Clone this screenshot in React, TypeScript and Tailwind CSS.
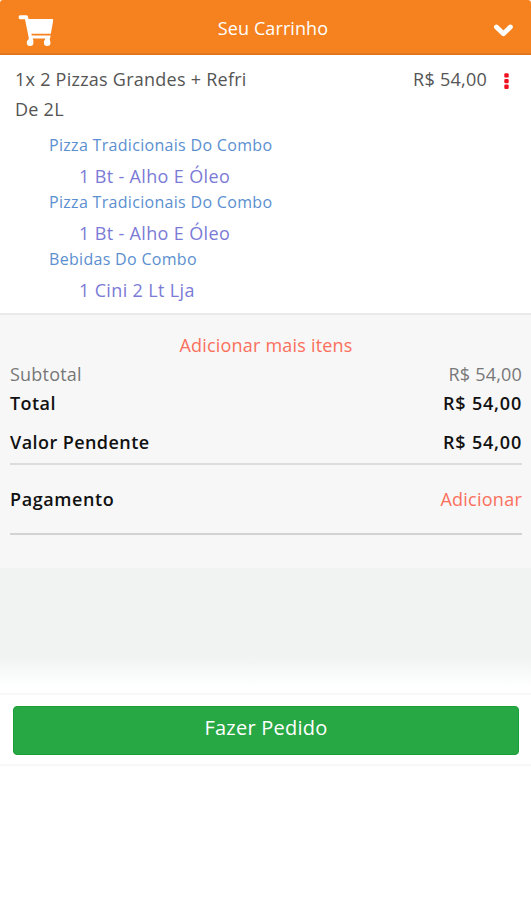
import type { ReactNode } from 'react'

interface ComboGroup {
  title: string
  option: string
}

const COMBO_GROUPS: ComboGroup[] = [
  { title: 'Pizza Tradicionais Do Combo', option: '1 Bt - Alho E Óleo' },
  { title: 'Pizza Tradicionais Do Combo', option: '1 Bt - Alho E Óleo' },
  { title: 'Bebidas Do Combo', option: '1 Cini 2 Lt Lja' },
]

function CartIcon() {
  return (
    <svg viewBox="0 0 36 32" className="mt-2 h-[32px] w-[36px] fill-white">
      <path d="M2 0.3H8.3Q9.6 0.3 9.9 1.6L10.5 4H34Q35.5 4 35.2 5.4L32.8 18.8H13.4L13.7 20.6H32.6L32.1 23.6H12.2Q11 23.6 10.7 22.4L7 4.3H2Q0.6 4.3 0.6 2.3Q0.6 0.3 2 0.3Z" />
      <path d="M11 22.5H14.5L15.5 26H10ZM27.5 22.5H31.5L32 26H26.5Z" />
      <circle cx="12.1" cy="27.7" r="3.3" />
      <circle cx="29.2" cy="27.7" r="3.3" />
    </svg>
  )
}

function CartHeader() {
  return (
    <header className="flex h-[55px] items-center justify-between rounded-t-[3px] border-b-2 border-[#e2761c] bg-[#f5821f] pr-[17px] pl-[18px] text-white">
      <CartIcon />
      <h1 className="mt-1 mr-px text-[18px] tracking-[0.1px]">Seu Carrinho</h1>
      <svg viewBox="0 0 21 15" className="mt-2 h-[15px] w-[21px] fill-none stroke-white" strokeWidth="4.8" strokeLinecap="round" strokeLinejoin="round">
        <path d="M3.4 4L10.4 10.8L17.4 4" />
      </svg>
    </header>
  )
}

function CartItem() {
  return (
    <section className="h-[260px] border-b-2 border-[#e9e9e9] bg-white pt-[10px]">
      <div className="flex items-start pr-[22px] pl-[15px] text-[18px] leading-[29.5px] tracking-[0.25px] text-[#555]">
        <p className="w-[250px]">1x 2 Pizzas Grandes + Refri De 2L</p>
        <span className="ml-auto">R$ 54,00</span>
        <svg viewBox="0 0 5 17" className="mt-[8px] ml-[17px] h-[17px] w-[5px] fill-[#f01020]">
          <rect x="0.3" y="0.2" width="4.4" height="4.4" rx="1.2" />
          <rect x="0.3" y="5.9" width="4.4" height="4.4" rx="1.2" />
          <rect x="0.3" y="11.6" width="4.4" height="4.4" rx="1.2" />
        </svg>
      </div>
      <ul className="mt-[7px] pl-[49px]">
        {COMBO_GROUPS.map((group, i) => (
          <li key={i} className="h-[57px]">
            <p className="text-[16px] leading-[29px] tracking-[0.31px] text-[#5b8fd0]">{group.title}</p>
            <p className="pl-[30px] text-[18px] leading-[32px] tracking-[0.35px] text-[#7b7bd6]">{group.option}</p>
          </li>
        ))}
      </ul>
    </section>
  )
}

interface SummaryRowProps {
  label: string
  className: string
  children: ReactNode
}

function SummaryRow({ label, className, children }: SummaryRowProps) {
  return (
    <div className={`flex items-center justify-between ${className}`}>
      <span>{label}</span>
      {children}
    </div>
  )
}

function Summary() {
  return (
    <section className="h-[253px] bg-[#f7f7f7] pr-[9px] pl-[10px] pt-[15px] text-[18px] leading-[30px] tracking-[0.2px]">
      <p className="text-center text-[#fb705c]">Adicionar mais itens</p>
      <SummaryRow label="Subtotal" className="h-[28px] text-[#777]">
        <span>R$ 54,00</span>
      </SummaryRow>
      <SummaryRow label="Total" className="h-[30px] font-semibold tracking-[0.45px] text-[#111]">
        <span className="tracking-[0.8px]">R$ 54,00</span>
      </SummaryRow>
      <SummaryRow label="Valor Pendente" className="h-[47px] border-b-2 border-[#dcdcdc] pt-[3px] font-semibold tracking-[0.43px] text-[#111]">
        <span className="tracking-[0.8px]">R$ 54,00</span>
      </SummaryRow>
      <SummaryRow label="Pagamento" className="h-[70px] border-b-2 border-[#d3d3d3] font-semibold tracking-[0.6px] text-[#111]">
        <span className="font-normal tracking-[0.25px] text-[#fb705c]">Adicionar</span>
      </SummaryRow>
    </section>
  )
}

export default function App() {
  return (
    <main className="flex h-[900px] w-[531px] flex-col bg-white font-['Open_Sans','Noto_Sans',sans-serif]">
      <CartHeader />
      <CartItem />
      <Summary />
      <div className="h-[125px] bg-linear-to-b from-[#f0f3f2] from-70% to-white to-95%" />
      <footer className="h-[73px] border-y-2 border-[#f8f8f8] pt-[11px] pr-[12px] pl-[13px]">
        <button className="block h-[49px] w-full rounded-[4px] border border-[#1b9e38] bg-[#28a745] pb-1.5 text-[20px] tracking-[0.25px] text-white">
          Fazer Pedido
        </button>
      </footer>
    </main>
  )
}
